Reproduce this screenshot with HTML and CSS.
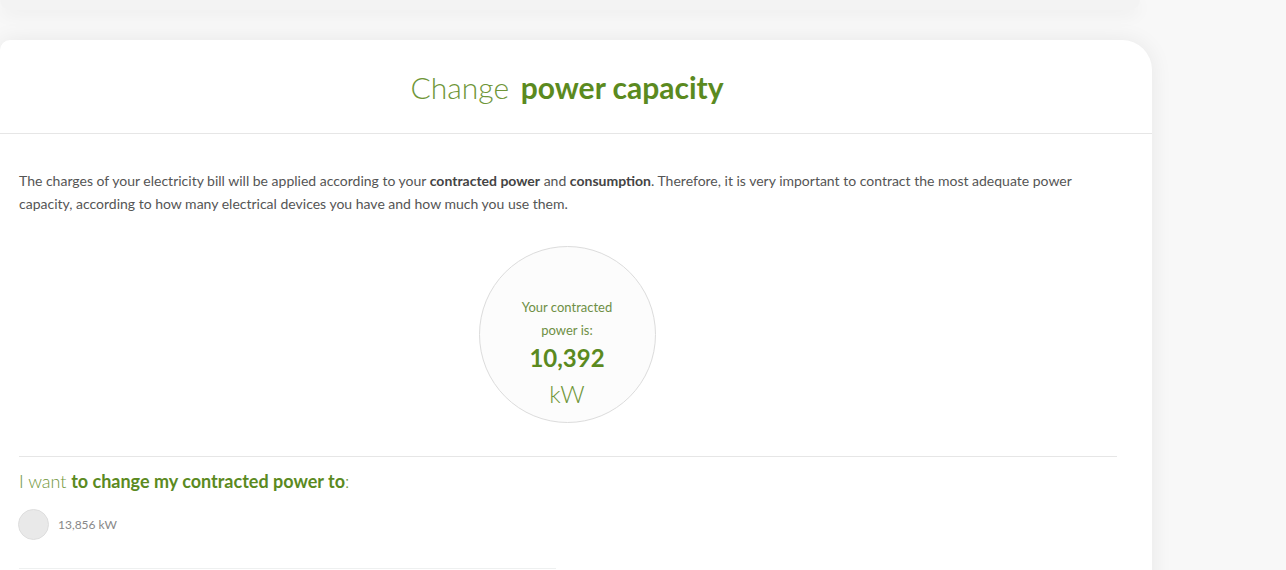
FILE: index.html
```html
<!DOCTYPE html>
<html lang="en">
<head>
<meta charset="utf-8">
<title>Change power capacity</title>
<link rel="stylesheet" href="styles.css">
</head>
<body>
<div class="page">
  <div class="topbar"></div>
  <div class="card">
    <div class="card-head">
      <h1 class="title"><span class="light">Change</span> <span class="bold">power capacity</span></h1>
    </div>
    <div class="card-body">
      <p class="intro">The charges of your electricity bill will be applied according to your <b>contracted power</b> and <b>consumption</b>. Therefore, it is very important to contract the most adequate power capacity, according to how many electrical devices you have and how much you use them.</p>
      <div class="circle-wrap">
        <div class="circle">
          <div class="circle-label">Your contracted<br>power is:</div>
          <div class="circle-value">10,392</div>
          <div class="circle-unit">kW</div>
        </div>
      </div>
      <hr class="divider">
      <h2 class="want"><span class="light">I want</span> <span class="bold">to change my contracted power to</span><span class="light">:</span></h2>
      <label class="option">
        <span class="radio"></span>
        <span class="option-text">13,856 kW</span>
      </label>
      <hr class="divider short">
    </div>
  </div>
</div>
</body>
</html>
```

FILE: styles.css
```css
html, body {
  margin: 0;
  padding: 0;
  background: #f8f8f8;
  font-family: Lato, "Open Sans", sans-serif;
  overflow: hidden;
  height: 570px;
}
.page {
  width: 1152px;
}
.topbar {
  height: 10px;
  width: 1140px;
  background: #f3f3f3;
  box-shadow: 0 4px 18px rgba(0, 0, 0, 0.06);
  border-radius: 0 0 20px 20px;
}
.card {
  margin-top: 30px;
  background: #fff;
  border-radius: 10px 30px 0 0;
  box-shadow: 0 0 22px rgba(0, 0, 0, 0.07);
  height: 560px;
}
.card-head {
  height: 93px;
  border-bottom: 1px solid #e6e6e6;
  display: flex;
  align-items: center;
  justify-content: center;
}
.title {
  margin: 0;
  font-size: 30px;
  font-weight: 400;
  color: #5b8a1f;
  transform: translateX(-9px);
}
.title .light {
  font-weight: 300;
  color: #6f9638;
  margin-right: 4px;
}
.title .bold {
  font-weight: 700;
  color: #5b8a1f;
}
.card-body {
  padding: 0 35px 0 19px;
}
.intro {
  margin: 35px 0 0 0;
  font-size: 14px;
  line-height: 23px;
  color: #555;
}
.intro b {
  font-weight: 700;
  color: #444;
}
.circle-wrap {
  display: flex;
  justify-content: center;
  margin-top: 31px;
}
.circle {
  width: 175px;
  border: 1px solid #dcdcdc;
  border-radius: 50%;
  background: #fcfcfc;
  display: flex;
  flex-direction: column;
  align-items: center;
  justify-content: flex-start;
  padding-top: 49px;
  box-sizing: content-box;
  height: 126px;
  text-align: center;
  color: #6f9638;
  transform: translateX(-1px);
}
.circle-label {
  font-size: 13px;
  line-height: 23px;
  font-weight: 400;
  color: #6e8f45;
}
.circle-value {
  font-size: 24px;
  font-weight: 700;
  color: #5b8a1f;
  line-height: 30px;
  margin-top: 1px;
}
.circle-unit {
  font-size: 24px;
  font-weight: 300;
  color: #6f9638;
  line-height: 36px;
  margin-top: 3px;
}
.divider {
  border: 0;
  border-top: 1px solid #e6e6e6;
  margin: 33px 0 0 0;
}
.divider.short {
  width: 537px;
  margin-top: 28px;
  border-top-color: #eef0f0;
}
.want {
  margin: 13px 0 0 0;
  font-size: 18px;
  line-height: 22px;
  font-weight: 400;
}
.want .light {
  font-weight: 300;
  color: #6f9638;
}
.want .bold {
  font-weight: 700;
  color: #5b8a1f;
}
.option {
  display: flex;
  align-items: center;
  gap: 9px;
  margin-top: 17px;
  margin-left: -1px;
}
.radio {
  width: 29px;
  height: 29px;
  border-radius: 50%;
  background: #e9e9e9;
  border: 1px solid #dedede;
  display: block;
}
.option-text {
  font-size: 12px;
  color: #888;
}
```
